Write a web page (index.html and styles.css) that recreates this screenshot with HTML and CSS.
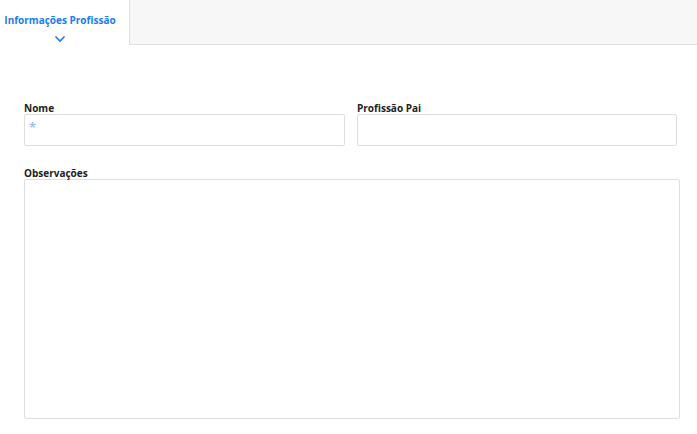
FILE: index.html
```html
<!DOCTYPE html>
<html lang="pt">
<head>
<meta charset="utf-8">
<link rel="stylesheet" href="styles.css">
</head>
<body>
<div class="tabs">
  <div class="tab active">
    <span class="tab-title">Informações Profissão</span>
    <svg class="chev" width="12" height="8" viewBox="0 0 12 8"><path d="M1.5 1.5 L6 6 L10.5 1.5" fill="none" stroke="#1a7cf2" stroke-width="1.6"/></svg>
  </div>
  <div class="tab-rest"></div>
</div>
<form class="form">
  <div class="row">
    <div class="field">
      <label class="label">Nome</label>
      <div class="input"><span class="req">*</span></div>
    </div>
    <div class="field">
      <label class="label">Profissão Pai</label>
      <div class="input"></div>
    </div>
  </div>
  <div class="field obs">
    <label class="label">Observações</label>
    <div class="textarea"></div>
  </div>
</form>
</body>
</html>
```
FILE: styles.css
```css
* { box-sizing: border-box; }
body { margin: 0; background: #fff; font-family: "Open Sans", "Noto Sans", sans-serif; }
.tabs { display: flex; height: 45px; }
.tab { width: 129px; display: flex; flex-direction: column; align-items: center; padding: 14px 9px 0 0; }
.tab-title { font-size: 10px; font-weight: 700; color: #1a7cf2; line-height: 12px; white-space: nowrap; }
.chev { margin-top: 9px; }
.tab-rest { flex: 1; background: #f7f7f8; border-left: 1px solid #dcdfe4; border-bottom: 1px solid #dcdfe4; }
.form { padding: 57px 17px 0 24px; }
.row { display: grid; grid-template-columns: 321px 320px; column-gap: 12px; }
.label { display: block; font-size: 10px; font-weight: 700; color: #222; line-height: 12px; }
.input { height: 32px; border: 1px solid #dedede; border-radius: 2px; padding: 5px 4px 0; }
.req { display: block; color: #a3c0f2; font-size: 13px; line-height: 14px; font-weight: 700; }
.obs { margin-top: 21px; width: 656px; }
.textarea { height: 240px; border: 1px solid #dedede; border-radius: 2px; }
```
